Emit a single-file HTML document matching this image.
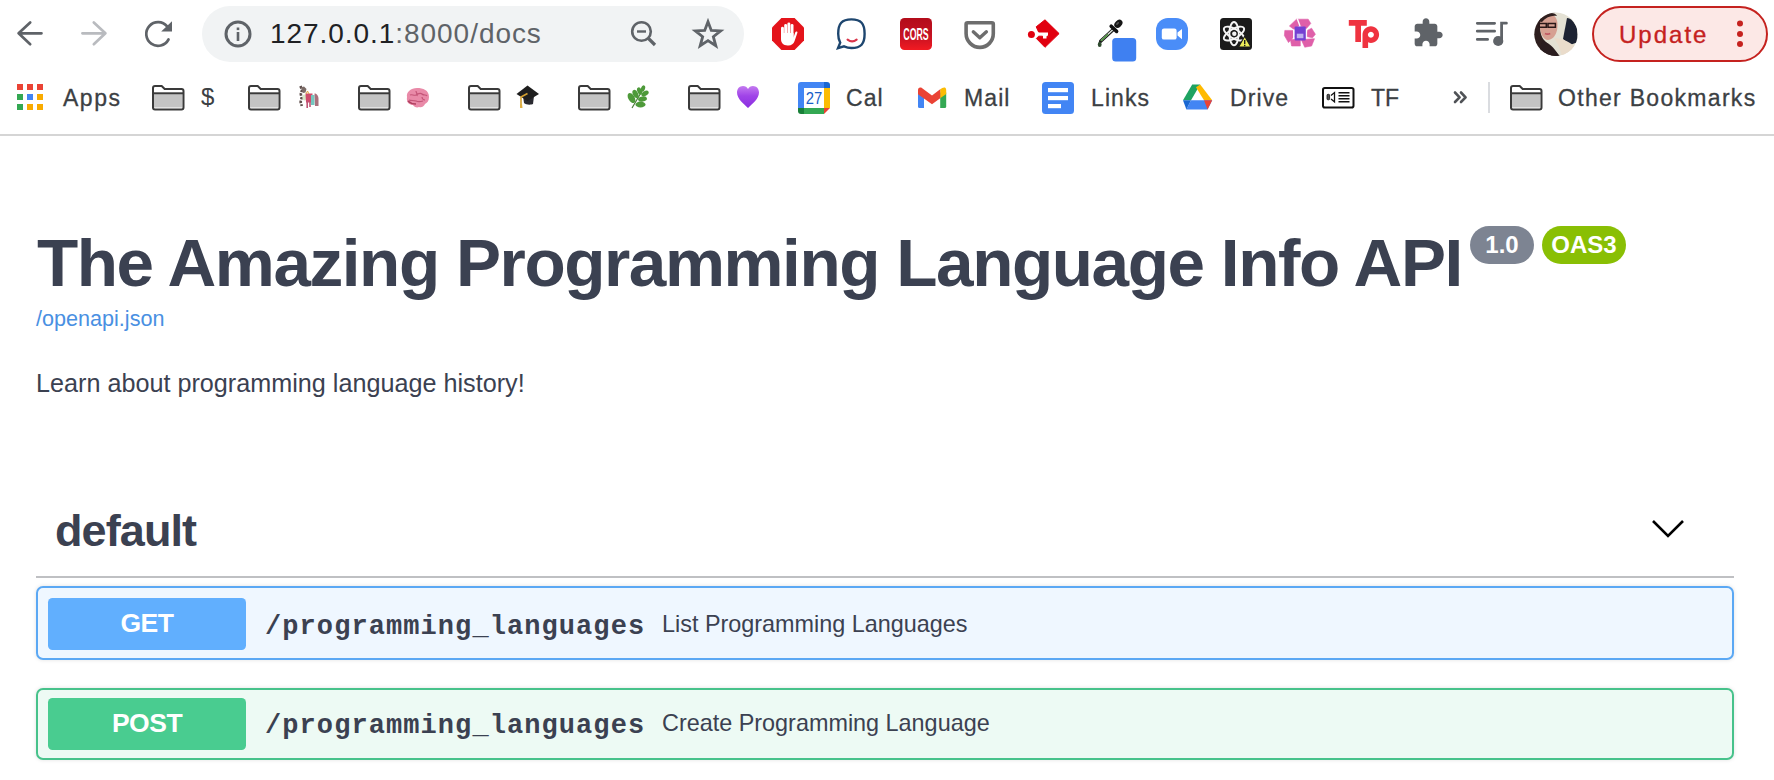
<!DOCTYPE html>
<html><head><meta charset="utf-8">
<style>
html{-webkit-font-smoothing:antialiased;}
html,body{margin:0;padding:0;width:1774px;height:780px;overflow:hidden;background:#fff;font-family:"Liberation Sans",sans-serif;}
.a{position:absolute;}
svg{position:absolute;overflow:visible;}
.bmt{position:absolute;top:82px;font-size:23px;color:#3c4043;line-height:32px;white-space:nowrap;letter-spacing:1.1px;-webkit-text-stroke:0.3px #3c4043;}
.t{white-space:nowrap;}
</style></head><body>
<!-- toolbar -->
<div class="a" style="left:0;top:0;width:1774px;height:136px;background:#fff;"></div>
<!-- back -->
<svg style="left:0;top:0" width="60" height="68" viewBox="0 0 60 68"><path d="M30.2 22.4L18.6 33.3 30.2 44.2M18.6 33.3H41.5" fill="none" stroke="#5f6368" stroke-width="2.7" stroke-linecap="round" stroke-linejoin="round"/></svg>
<!-- forward -->
<svg style="left:60px;top:0" width="60" height="68" viewBox="0 0 60 68"><path d="M33.8 22.4L45.4 33.3 33.8 44.2M45.4 33.3H22.4" fill="none" stroke="#b9bbbf" stroke-width="2.7" stroke-linecap="round" stroke-linejoin="round"/></svg>
<!-- reload -->
<svg style="left:138px;top:14px" width="40" height="40" viewBox="0 0 40 40"><path d="M29.14 12.42A11.8 11.8 0 1 0 30.5 25.5" fill="none" stroke="#5f6368" stroke-width="2.7" stroke-linecap="round"/><path d="M23.2 17.4L34 7.2V17.4Z" fill="#5f6368"/></svg>
<!-- omnibox -->
<div class="a" style="left:202px;top:6px;width:542px;height:56px;border-radius:28px;background:#f1f3f4;"></div>
<svg style="left:224px;top:20px" width="28" height="28" viewBox="0 0 28 28"><circle cx="14" cy="14" r="12" fill="none" stroke="#5f6368" stroke-width="3"/><rect x="12.7" y="12" width="2.6" height="9" fill="#5f6368"/><rect x="12.7" y="7.5" width="2.6" height="2.6" fill="#5f6368"/></svg>
<div class="a t" style="left:270px;top:14px;font-size:28px;line-height:40px;color:#202124;letter-spacing:0.95px;">127.0.0.1<span style="color:#5f6368">:8000/docs</span></div>
<svg style="left:630px;top:20px" width="28" height="28" viewBox="0 0 28 28"><circle cx="11.5" cy="11.5" r="9.3" fill="none" stroke="#5f6368" stroke-width="2.6"/><rect x="7" y="10.3" width="9" height="2.4" fill="#5f6368"/><path d="M18 18L25 25" stroke="#5f6368" stroke-width="3.2"/></svg>
<svg style="left:692px;top:19px" width="32" height="32" viewBox="0 0 32 32"><polygon points="16.00,2.70 19.29,11.47 28.65,11.89 21.33,17.73 23.82,26.76 16.00,21.60 8.18,26.76 10.67,17.73 3.35,11.89 12.71,11.47" fill="none" stroke="#5f6368" stroke-width="2.8" stroke-linejoin="miter" stroke-miterlimit="10"/></svg>

<!-- update -->
<div class="a" style="left:1592px;top:6px;width:172px;height:52px;border:2px solid #c5221f;border-radius:28px;background:#fce8e6;"></div>
<div class="a t" style="left:1619px;top:15px;font-size:24px;line-height:40px;color:#c5221f;letter-spacing:2px;-webkit-text-stroke:0.35px #c5221f;">Update</div>
<svg style="left:1734px;top:18px" width="12" height="32" viewBox="0 0 12 32"><circle cx="6" cy="5.5" r="3" fill="#c5221f"/><circle cx="6" cy="16" r="3" fill="#c5221f"/><circle cx="6" cy="26" r="3" fill="#c5221f"/></svg>

<!-- bookmarks -->
<div class="bmt" style="left:63px;letter-spacing:1.5px">Apps</div>
<div class="bmt" style="left:846px">Cal</div>
<div class="bmt" style="left:964px">Mail</div>
<div class="bmt" style="left:1091px">Links</div>
<div class="bmt" style="left:1230px">Drive</div>
<div class="bmt" style="left:1371px;letter-spacing:0">TF</div>
<div class="bmt" style="left:1558px;letter-spacing:1.3px">Other Bookmarks</div>
<div class="a" style="left:0;top:134px;width:1774px;height:2px;background:#d5d5d5;"></div>


<!-- ========== extension icons ========== -->
<!-- adblock -->
<svg style="left:772px;top:18px" width="32" height="32" viewBox="0 0 32 32"><path fill="#e4141b" d="M9.4 0H22.6L32 9.4V22.6L22.6 32H9.4L0 22.6V9.4Z"/><g fill="#fff"><rect x="9" y="8.8" width="2.9" height="13" rx="1.45"/><rect x="12.2" y="6" width="2.9" height="14" rx="1.45"/><rect x="15.4" y="4.4" width="2.9" height="15" rx="1.45"/><rect x="18.6" y="6" width="2.9" height="14" rx="1.45"/><path d="M9 15H21.5V19.5L23.3 14.3C23.8 13 25.8 13.3 25.4 14.8L22.6 23C21.6 26 19.4 27.4 16.5 27.4H15.5C11.5 27.4 9 25 9 21Z"/></g></svg>
<!-- chat bubble -->
<svg style="left:836px;top:17px" width="32" height="34" viewBox="0 0 32 34"><path fill="none" stroke="#1e466f" stroke-width="2.4" d="M15.4 2.4C25 2.4 28.6 6.5 28.6 16.8S25 31 15.4 31C12.5 31 10.3 30.4 8 29.4L2 31.2 4.2 25.6C2.8 23.4 2.2 20.4 2.2 16.8 2.2 6.5 5.8 2.4 15.4 2.4Z"/><path fill="none" stroke="#d9344a" stroke-width="2.2" stroke-linecap="round" d="M11.6 22.6Q16.1 26.2 20.6 22.6"/></svg>
<!-- CORS -->
<svg style="left:900px;top:18px" width="32" height="32" viewBox="0 0 32 32"><defs><linearGradient id="cg" x1="0" y1="0" x2="0" y2="1"><stop offset="0" stop-color="#b30c1a"/><stop offset=".55" stop-color="#c41222"/><stop offset="1" stop-color="#f21a22"/></linearGradient></defs><rect width="32" height="32" rx="4.5" fill="url(#cg)"/><text x="16" y="22.3" text-anchor="middle" font-family="Liberation Sans" font-weight="bold" font-size="17" fill="#fff" textLength="25.4" lengthAdjust="spacingAndGlyphs">CORS</text></svg>
<!-- pocket -->
<svg style="left:964px;top:21px" width="32" height="29" viewBox="0 0 32 29"><path fill="none" stroke="#6d6d6d" stroke-width="3.6" d="M3.6 1.8H27.8c.9 0 1.5.6 1.5 1.5V12.5c0 7.8-6 13.9-13.4 13.9S2.1 20.3 2.1 12.5V3.3c0-.9.6-1.5 1.5-1.5Z"/><path fill="none" stroke="#6d6d6d" stroke-width="3.4" stroke-linecap="round" stroke-linejoin="round" d="M9.3 10.8l6.5 6 6.6-6"/></svg>
<!-- key diamond -->
<svg style="left:1027px;top:18px" width="34" height="31" viewBox="0 0 34 31"><path fill="#e1000f" stroke="#e1000f" stroke-width="1" stroke-linejoin="round" d="M9.2 8.8L18 1.8 32.1 15.6 18 29.3 9.4 20.5 11.6 18.2H15.5V21H20V18.2H21.5V14H11.6Z"/><circle cx="4.4" cy="16.6" r="3.5" fill="#e1000f"/></svg>
<!-- eyedropper -->
<svg style="left:1096px;top:18px" width="42" height="44" viewBox="0 0 42 44"><rect x="16.2" y="20" width="24" height="23.4" rx="3.5" fill="#3f80f1"/><path d="M4.6 23.2L17.3 11.4" stroke="#1a1a1a" stroke-width="3.4" stroke-linecap="round"/><path d="M5 22.8L16.8 11.8" stroke="#dfe6df" stroke-width="1.4"/><path d="M5 22.8L12 16.3" stroke="#4a9a3a" stroke-width="1.2"/><path d="M15.2 8.2L20.6 13.4" stroke="#111" stroke-width="3.6" stroke-linecap="round"/><ellipse cx="22.4" cy="5.8" rx="4.6" ry="3.4" transform="rotate(-45 22.4 5.8)" fill="#161616"/><ellipse cx="21.6" cy="5.4" rx="1.8" ry="0.9" transform="rotate(-45 21.6 5.4)" fill="#555"/><ellipse cx="3.7" cy="26.4" rx="1.9" ry="2.6" fill="#2f4a2f"/></svg>
<!-- zoom -->
<svg style="left:1156px;top:18px" width="32" height="32" viewBox="0 0 32 32"><rect width="32" height="32" rx="12" fill="#4a8df8"/><rect x="5.8" y="10.6" width="14.8" height="11" rx="2.2" fill="#fff"/><path fill="#fff" d="M21.5 14.6L26 11V21.2L21.5 17.6Z"/></svg>
<!-- react -->
<svg style="left:1220px;top:18px" width="32" height="32" viewBox="0 0 32 32"><rect width="32" height="32" rx="3.5" fill="#1b1b1b"/><g fill="none" stroke="#f4f4f4" stroke-width="1.9"><ellipse cx="14" cy="15.6" rx="11.4" ry="4.6" transform="rotate(-30 14 15.6)"/><ellipse cx="14" cy="15.6" rx="11.4" ry="4.6" transform="rotate(30 14 15.6)"/><ellipse cx="14" cy="15.6" rx="4.6" ry="11.6"/></g><circle cx="14.3" cy="15.8" r="3.4" fill="#1b1b1b"/><circle cx="14.3" cy="15.8" r="2.2" fill="#f0f0f0"/><path d="M24.7 18.3L31 29H18.5Z" fill="#eded5a" stroke="#1b1b1b" stroke-width="1.2" stroke-linejoin="round"/><rect x="24" y="22" width="1.4" height="4" fill="#1b1b1b"/><rect x="24" y="26.8" width="1.4" height="1.4" fill="#1b1b1b"/></svg>
<!-- recycle -->
<svg style="left:1284px;top:18px" width="32" height="31" viewBox="0 0 32 31"><g fill="#df5fa9" stroke="#df5fa9" stroke-width="0.6" stroke-linejoin="round"><path d="M5.4 8L12.5 1.2H24.2L26.8 5.4 22.4 10.6 15.4 7.6 10 11.5Z"/><path d="M0.8 12.4H8.9L9.8 18.9 4.5 24.6 0.4 17.6Z"/><path d="M6.3 21.5H16.3V28H7.6Z"/><path d="M17.2 21.5L30.5 20.7 27.6 28 20.7 29.2Z"/><path d="M23.3 12.4L27.6 10.2 31.4 16.3 28.5 19.8 22.4 18.5Z"/></g><path d="M13.2 0.5L16 8" stroke="#fff" stroke-width="1.4"/><path d="M9.6 11.5V21M22.6 11.5L22.6 20" stroke="#fff" stroke-width="1"/><rect x="10.6" y="8.5" width="11.2" height="13.9" rx="1" fill="#7440d2"/><rect x="12.8" y="15.7" width="6.6" height="4.5" fill="#bfb0ee"/></svg>
<!-- Tp -->
<svg style="left:1348px;top:19px" width="32" height="30" viewBox="0 0 32 30"><path fill="#ef3340" d="M0.8 0.9H18.8V6.8H13V22.9H7.3V6.8H0.8Z"/><path fill="#ef3340" fill-rule="evenodd" d="M14.5 28.9V16c0-5.3 3.7-8.8 8.4-8.8s8.2 3.6 8.2 8.4-3.6 8.3-8.2 8.3c-1 0-2-.2-2.8-.6v5.6ZM22.9 12.8a3 3 0 1 0 .01 0Z"/></svg>
<!-- puzzle -->
<svg style="left:1412px;top:17px" width="32" height="32" viewBox="0 0 24 24"><path fill="#5f6368" d="M20.5 11H19V7c0-1.1-.9-2-2-2h-4V3.5C13 2.12 11.88 1 10.5 1S8 2.12 8 3.5V5H4c-1.1 0-1.99.9-1.99 2v3.8H3.5c1.49 0 2.7 1.21 2.7 2.7s-1.21 2.7-2.7 2.7H2V20c0 1.1.9 2 2 2h3.8v-1.5c0-1.49 1.21-2.7 2.7-2.7 1.49 0 2.7 1.21 2.7 2.7V22H17c1.1 0 2-.9 2-2v-4h1.5c1.38 0 2.5-1.12 2.5-2.5S21.88 11 20.5 11z"/></svg>
<!-- queue music -->
<svg style="left:1474px;top:20px" width="36" height="28" viewBox="0 0 36 28"><g fill="none" stroke="#5f6368" stroke-width="2.8" stroke-linecap="round"><path d="M3.3 3.3H20.6M3.3 11.2H20.6M3.3 19.4H13.6"/><path d="M27.6 20.5V3.2H32.4"/></g><circle cx="24.2" cy="21" r="5.1" fill="#5f6368"/></svg>
<!-- avatar -->
<svg style="left:1534px;top:12px" width="44" height="44" viewBox="0 0 44 44"><defs><clipPath id="av"><circle cx="22" cy="22.2" r="21.7"/></clipPath></defs><g clip-path="url(#av)"><rect width="44" height="44" fill="#e4e1d4"/><path d="M33 6C37 6 40 10 43 16L44 30 36 33 29 27Z" fill="#1d2333"/><path d="M0 0H22C14 1 8 4 6.5 11 5.5 19 7 25 11 29L26 44H0Z" fill="#2e1f1f"/><path d="M6 13C6 6 10 2.5 16 2.5 21 2.5 23.5 7 23.5 13 23.5 21 20 27.5 14 28 9 28 6 21 6 13Z" fill="#d6a092"/><path d="M4 9C6 3 11 1 17 1 20 1 22 2 23 4 18 3 12 5 8 10Z" fill="#2e1f1f"/><path d="M5 11.5H12.3V15.2H5ZM14 11.5H21.4V15.2H14Z" fill="none" stroke="#2a1818" stroke-width="1.5"/><path d="M11 21.5Q13.5 22.8 16.2 21.5" stroke="#c05560" stroke-width="1.8" fill="none"/><path d="M20 26C28 26 36 30 43 36L40 44H28C26 36 23 30 20 26Z" fill="#eadccb"/><path d="M8 29C14 30 20 35 25 44H4Z" fill="#2a1d1f"/></g></svg>

<!-- ========== bookmark icons ========== -->
<!-- apps grid -->
<svg style="left:17px;top:84px" width="27" height="27" viewBox="0 0 27 27"><rect x="0" y="0" width="6" height="6" fill="#ea4335"/><rect x="10" y="0" width="6" height="6" fill="#ea4335"/><rect x="20" y="0" width="6" height="6" fill="#ea4335"/><rect x="0" y="10" width="6" height="6" fill="#34a853"/><rect x="10" y="10" width="6" height="6" fill="#4285f4"/><rect x="20" y="10" width="6" height="6" fill="#f9ab00"/><rect x="0" y="20" width="6" height="6" fill="#34a853"/><rect x="10" y="20" width="6" height="6" fill="#f9ab00"/><rect x="20" y="20" width="6" height="6" fill="#f9ab00"/></svg>
<svg style="left:152px;top:85px" width="33" height="26" viewBox="0 0 33 26"><path d="M1.9 9.2H30.5V22.5H1.9Z" fill="#c4c4c4"/><path fill="none" stroke="#3a3a3a" stroke-width="2" stroke-linejoin="round" d="M1 3Q1 1 3 1H9.7L12.7 4H29.5Q31.5 4 31.5 6V22.5Q31.5 24.5 29.5 24.5H3Q1 24.5 1 22.5Z"/><path d="M1 8.3H31.5" stroke="#3a3a3a" stroke-width="2"/></svg>
<svg style="left:248px;top:85px" width="33" height="26" viewBox="0 0 33 26"><path d="M1.9 9.2H30.5V22.5H1.9Z" fill="#c4c4c4"/><path fill="none" stroke="#3a3a3a" stroke-width="2" stroke-linejoin="round" d="M1 3Q1 1 3 1H9.7L12.7 4H29.5Q31.5 4 31.5 6V22.5Q31.5 24.5 29.5 24.5H3Q1 24.5 1 22.5Z"/><path d="M1 8.3H31.5" stroke="#3a3a3a" stroke-width="2"/></svg>
<svg style="left:358px;top:85px" width="33" height="26" viewBox="0 0 33 26"><path d="M1.9 9.2H30.5V22.5H1.9Z" fill="#c4c4c4"/><path fill="none" stroke="#3a3a3a" stroke-width="2" stroke-linejoin="round" d="M1 3Q1 1 3 1H9.7L12.7 4H29.5Q31.5 4 31.5 6V22.5Q31.5 24.5 29.5 24.5H3Q1 24.5 1 22.5Z"/><path d="M1 8.3H31.5" stroke="#3a3a3a" stroke-width="2"/></svg>
<svg style="left:468px;top:85px" width="33" height="26" viewBox="0 0 33 26"><path d="M1.9 9.2H30.5V22.5H1.9Z" fill="#c4c4c4"/><path fill="none" stroke="#3a3a3a" stroke-width="2" stroke-linejoin="round" d="M1 3Q1 1 3 1H9.7L12.7 4H29.5Q31.5 4 31.5 6V22.5Q31.5 24.5 29.5 24.5H3Q1 24.5 1 22.5Z"/><path d="M1 8.3H31.5" stroke="#3a3a3a" stroke-width="2"/></svg>
<svg style="left:578px;top:85px" width="33" height="26" viewBox="0 0 33 26"><path d="M1.9 9.2H30.5V22.5H1.9Z" fill="#c4c4c4"/><path fill="none" stroke="#3a3a3a" stroke-width="2" stroke-linejoin="round" d="M1 3Q1 1 3 1H9.7L12.7 4H29.5Q31.5 4 31.5 6V22.5Q31.5 24.5 29.5 24.5H3Q1 24.5 1 22.5Z"/><path d="M1 8.3H31.5" stroke="#3a3a3a" stroke-width="2"/></svg>
<svg style="left:688px;top:85px" width="33" height="26" viewBox="0 0 33 26"><path d="M1.9 9.2H30.5V22.5H1.9Z" fill="#c4c4c4"/><path fill="none" stroke="#3a3a3a" stroke-width="2" stroke-linejoin="round" d="M1 3Q1 1 3 1H9.7L12.7 4H29.5Q31.5 4 31.5 6V22.5Q31.5 24.5 29.5 24.5H3Q1 24.5 1 22.5Z"/><path d="M1 8.3H31.5" stroke="#3a3a3a" stroke-width="2"/></svg>
<svg style="left:1510px;top:85px" width="33" height="26" viewBox="0 0 33 26"><path d="M1.9 9.2H30.5V22.5H1.9Z" fill="#c4c4c4"/><path fill="none" stroke="#3a3a3a" stroke-width="2" stroke-linejoin="round" d="M1 3Q1 1 3 1H9.7L12.7 4H29.5Q31.5 4 31.5 6V22.5Q31.5 24.5 29.5 24.5H3Q1 24.5 1 22.5Z"/><path d="M1 8.3H31.5" stroke="#3a3a3a" stroke-width="2"/></svg>

<div class="a t" style="left:201px;top:81px;font-size:24px;line-height:32px;color:#3c4043;">$</div>
<!-- carousel -->
<svg style="left:298px;top:85px" width="22" height="24" viewBox="0 0 22 24"><path d="M2.5 1L4 5 2.8 9 3.6 13 2.6 17 3.8 21" stroke="#5e4e4c" stroke-width="2.6" fill="none" stroke-dasharray="2.6 1.2"/><path d="M3 2.5L6 1.5 8.5 4 7.5 7.5 5 8Z" fill="#7a6a66"/><ellipse cx="6.5" cy="12.5" rx="2" ry="3" fill="#d6e6c4"/><path d="M7.5 8.5H14.5L14 17.5H8Z" fill="#cf4b6c"/><path d="M9.2 16V23M12 16V22" stroke="#c05575" stroke-width="1.6"/><path d="M13 10H16.5V20H13Z" fill="#74c6bf"/><path d="M16.5 8.5C19 8.5 20.5 11 20.5 14V21H17Z" fill="#a8707c"/><path d="M8 9L9.5 6 11 9" stroke="#e0a040" stroke-width="1" fill="none"/></svg>
<!-- brain -->
<svg style="left:405px;top:87px" width="26" height="22" viewBox="0 0 26 22"><path d="M2 10C1 5 6 1 12 1s12 2 12 9c0 4-2 6-4 7-1 2-3 4-6 3-2 1-5 0-6-2-3 0-7-2-6-8Z" fill="#e98aa8"/><path d="M5 8c2-1 4 1 6 0s4-3 6-1 4 0 5 2M4 13c2 1 5 0 7 1s4 1 7 0M11 4c0 2 2 3 1 5M17 10c0 2 2 3 3 3" stroke="#c45578" stroke-width="1.2" fill="none"/><path d="M3 14c2 2 5 3 8 3" stroke="#b04060" stroke-width="1.5" fill="none"/></svg>
<!-- grad cap -->
<svg style="left:516px;top:85px" width="24" height="25" viewBox="0 0 24 25"><path d="M7 11l1 7c2 2 7 2 9 1l1-8Z" fill="#2a2a30"/><path d="M11.5 0.5L23 9 11.5 16 0.5 9Z" fill="#1e1e1e"/><path d="M11.5 8.5L5 12V22" stroke="#d4a030" stroke-width="1.6" fill="none"/><path d="M4.5 19h1.5l.5 4h-2.5Z" fill="#e0b040"/></svg>
<!-- leaf -->
<svg style="left:627px;top:85px" width="22" height="24" viewBox="0 0 22 24"><path d="M5 23L15 6" stroke="#4a7a3a" stroke-width="1.2"/><g fill="#4e9a3a"><ellipse cx="4.5" cy="13" rx="3.2" ry="5.5" transform="rotate(-30 4.5 13)"/><ellipse cx="8.5" cy="9" rx="2.6" ry="4.5" transform="rotate(-25 8.5 9)"/><ellipse cx="12.5" cy="6" rx="2.2" ry="3.8" transform="rotate(-20 12.5 6)"/><ellipse cx="16" cy="3.5" rx="2" ry="3.3" transform="rotate(20 16 3.5)"/><ellipse cx="18" cy="8.5" rx="4" ry="2.4" transform="rotate(-30 18 8.5)"/><ellipse cx="15.5" cy="14" rx="4.5" ry="2.6" transform="rotate(-10 15.5 14)"/><ellipse cx="13.5" cy="19.5" rx="5" ry="3" transform="rotate(0 13.5 19.5)"/></g></svg>
<!-- heart -->
<svg style="left:737px;top:86px" width="22" height="22" viewBox="0 0 22 22"><defs><linearGradient id="hg" x1="0" y1="0" x2="0" y2="1"><stop offset="0" stop-color="#c47af0"/><stop offset=".45" stop-color="#a044e8"/><stop offset="1" stop-color="#8a2ee0"/></linearGradient></defs><path d="M11 22C7 18 0 13 0 6.5 0 2.8 2.5 0 6 0c2.3 0 4 1.3 5 3 1-1.7 2.7-3 5-3 3.5 0 6 2.8 6 6.5C22 13 15 18 11 22Z" fill="url(#hg)"/></svg>
<!-- calendar -->
<svg style="left:798px;top:82px" width="32" height="32" viewBox="0 0 32 32"><path d="M3 0H26V6H6V26H0V3Q0 0 3 0Z" fill="#4285f4"/><path d="M26 0H29Q32 0 32 3V6H26Z" fill="#1967d2"/><path d="M26 6H32V26H26Z" fill="#fbbc04"/><path d="M6 26H26V32H6Z" fill="#34a853"/><path d="M0 26H6V32H3Q0 32 0 29Z" fill="#188038"/><path d="M26 26H32L26 32Z" fill="#ea4335"/><text x="16" y="22.2" text-anchor="middle" font-family="Liberation Sans" font-size="17" fill="#1a5fc8" textLength="16.5" lengthAdjust="spacingAndGlyphs">27</text></svg>
<!-- gmail -->
<svg style="left:918px;top:87px" width="29" height="22" viewBox="0 0 29 22"><path d="M0 5.5H6V21H1.5Q0 21 0 19.5Z" fill="#4285f4"/><path d="M22.2 5.5H28.2V19.5Q28.2 21 26.7 21H22.2Z" fill="#34a853"/><path d="M22.2 2.2Q25 0 27 0.6Q28.2 1.2 28.2 3V7L22.2 11.2Z" fill="#fbbc04"/><path d="M0 3.2Q0 0 3.2 0.6L14 8.6 22.2 2.2V11.2L14 17.2 0 7.3Z" fill="#ea4335"/></svg>
<!-- links (docs) -->
<svg style="left:1042px;top:82px" width="32" height="32" viewBox="0 0 32 32"><rect width="32" height="32" rx="3.5" fill="#4285f4"/><rect x="6" y="6" width="20" height="4.2" fill="#fff"/><rect x="6" y="14" width="20" height="4.2" fill="#fff"/><rect x="6" y="22" width="13" height="4.2" fill="#fff"/></svg>
<!-- drive -->
<svg style="left:1183px;top:84px" width="30" height="27" viewBox="0 0 30 27"><path d="M9.2 0.5H17.2L8 16.2H0Z" fill="#1ea362"/><path d="M17.2 0.5L29.2 16.2H21L13 3.2Z" fill="#ffba00"/><path d="M8 16.2H29.2L24.6 25.6H3.4Z" fill="#4285f4"/><path d="M0 16.2H8L3.4 25.6Z" fill="#1967d2"/><path d="M21 16.2H29.2L24.6 25.6Z" fill="#ea4335"/></svg>
<!-- TF -->
<svg style="left:1322px;top:87px" width="33" height="22" viewBox="0 0 33 22"><rect x="1" y="1" width="30.5" height="19.5" rx="1.8" fill="none" stroke="#111" stroke-width="2"/><rect x="5" y="7.3" width="2.6" height="5.5" rx="1" fill="#555" stroke="#111" stroke-width="0.8"/><path d="M9 8.5L12.5 5.6V14.8L9 12" fill="none" stroke="#111" stroke-width="1.3"/><path d="M16.5 5.8H27.5M16.5 8.8H27.5M16.5 11.8H27.5M16.5 14.8H27.5" stroke="#111" stroke-width="1.4"/></svg>
<svg style="left:1450px;top:88px" width="20" height="18" viewBox="0 0 20 18"><path d="M5 4.5L9.6 9.3 5 14M11 4.5L15.6 9.3 11 14" fill="none" stroke="#505357" stroke-width="2.6" stroke-linecap="round" stroke-linejoin="round"/></svg>
<div class="a" style="left:1488px;top:82px;width:2px;height:31px;background:#dadce0;"></div>

<!-- page -->
<div class="a t" style="left:37px;top:225px;font-size:67.5px;line-height:76px;font-weight:bold;color:#3b4151;letter-spacing:-1.44px;">The Amazing Programming Language Info API</div>
<div class="a t" style="left:1470px;top:225.5px;height:38px;width:64px;border-radius:19px;background:#7d8492;color:#fff;font-weight:bold;font-size:24px;line-height:38px;text-align:center;">1.0</div>
<div class="a t" style="left:1542px;top:225.5px;height:38px;width:84px;border-radius:19px;background:#89bf04;color:#fff;font-weight:bold;font-size:24px;line-height:38px;text-align:center;">OAS3</div>
<div class="a t" style="left:36px;top:305px;font-size:21.6px;line-height:28px;color:#4990e2;">/openapi.json</div>
<div class="a t" style="left:36px;top:367px;font-size:25.2px;line-height:32px;color:#3b4151;">Learn about programming language history!</div>

<div class="a t" style="left:55px;top:504px;font-size:45px;line-height:54px;font-weight:bold;color:#3b4151;letter-spacing:-0.9px;">default</div>
<svg style="left:1650px;top:516px" width="36" height="24" viewBox="0 0 36 24"><path d="M3 5L18 20L33 5" fill="none" stroke="#000" stroke-width="2.6"/></svg>
<div class="a" style="left:36px;top:576px;width:1698px;height:2px;background:#bfc0c3;"></div>

<div class="a" style="left:36px;top:586px;width:1694px;height:70px;border:2px solid #5ba8f4;border-radius:7px;background:#eff7ff;box-shadow:0 0 4px rgba(0,0,0,.12);"></div>
<div class="a t" style="left:48px;top:598px;width:198px;height:52px;border-radius:4.5px;background:#61affe;color:#fff;font-weight:bold;font-size:26.5px;letter-spacing:-0.5px;line-height:50px;text-align:center;">GET</div>
<div class="a t" style="left:265px;top:608.5px;font-family:'Liberation Mono',monospace;font-weight:bold;font-size:27px;letter-spacing:1.08px;line-height:36px;color:#3b4151;">/programming_languages</div>
<div class="a t" style="left:662px;top:609px;font-size:23.4px;line-height:30px;color:#3b4151;">List Programming Languages</div>

<div class="a" style="left:36px;top:688px;width:1694px;height:68px;border:2px solid #47c28b;border-radius:7px;background:#edfaf4;box-shadow:0 0 4px rgba(0,0,0,.12);"></div>
<div class="a t" style="left:48px;top:698px;width:198px;height:52px;border-radius:4.5px;background:#49cc90;color:#fff;font-weight:bold;font-size:26.5px;letter-spacing:-0.5px;line-height:50px;text-align:center;">POST</div>
<div class="a t" style="left:265px;top:707.5px;font-family:'Liberation Mono',monospace;font-weight:bold;font-size:27px;letter-spacing:1.08px;line-height:36px;color:#3b4151;">/programming_languages</div>
<div class="a t" style="left:662px;top:708px;font-size:23.4px;line-height:30px;color:#3b4151;">Create Programming Language</div>
</body></html>
